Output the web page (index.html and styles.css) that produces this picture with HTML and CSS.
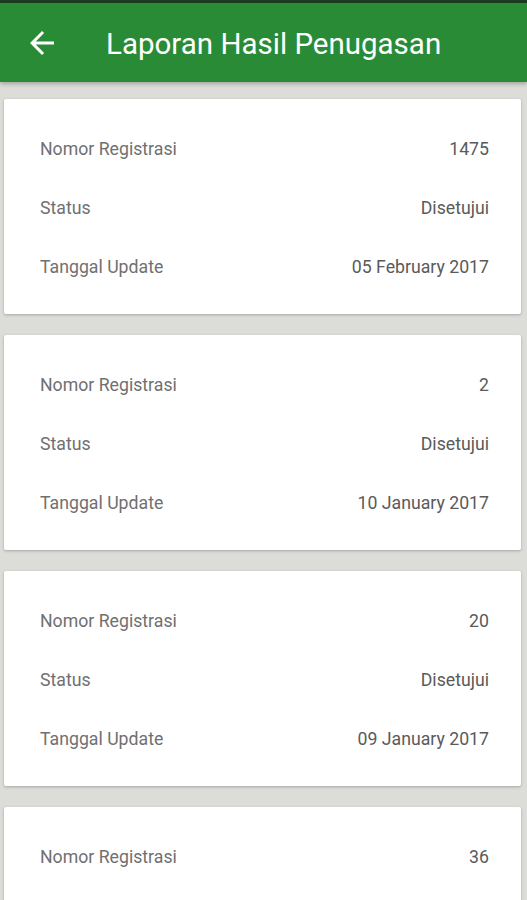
FILE: index.html
```html
<!DOCTYPE html>
<html>
  <head>
    <title>Laporan Hasil Penugasan</title>
    <link rel="stylesheet" href="styles.css">
  </head>
  <body>
    <div class="status-bar"></div>
    <div class="app-bar">
      <svg class="back" viewBox="0 0 24 24">
        <path d="M20 11H7.83l5.59-5.59L12 4l-8 8 8 8 1.41-1.41L7.83 13H20v-2z" fill="#fff"/>
      </svg>
      <span class="title">Laporan Hasil Penugasan</span>
    </div>

    <div class="list">
      <div class="card">
        <div class="row"><span class="label">Nomor Registrasi</span><span class="value">1475</span></div>
        <div class="row"><span class="label">Status</span><span class="value">Disetujui</span></div>
        <div class="row"><span class="label">Tanggal Update</span><span class="value">05 February 2017</span></div>
      </div>
      <div class="card">
        <div class="row"><span class="label">Nomor Registrasi</span><span class="value">2</span></div>
        <div class="row"><span class="label">Status</span><span class="value">Disetujui</span></div>
        <div class="row"><span class="label">Tanggal Update</span><span class="value">10 January 2017</span></div>
      </div>
      <div class="card">
        <div class="row"><span class="label">Nomor Registrasi</span><span class="value">20</span></div>
        <div class="row"><span class="label">Status</span><span class="value">Disetujui</span></div>
        <div class="row"><span class="label">Tanggal Update</span><span class="value">09 January 2017</span></div>
      </div>
      <div class="card">
        <div class="row"><span class="label">Nomor Registrasi</span><span class="value">36</span></div>
      </div>
    </div>
  </body>
</html>
```

FILE: styles.css
```css
html, body {
    padding: 0;
    margin: 0;
}

body {
    background-color: #dcdcd9;
    font-family: Roboto, "Liberation Sans", sans-serif;
    height: 900px;
    overflow: hidden;
}

.status-bar {
    height: 3px;
    background-color: #1d3b21;
}

.app-bar {
    height: 79px;
    background-color: #2a8b36;
    display: flex;
    align-items: center;
    box-shadow: 0 2px 4px rgba(0, 0, 0, 0.25);
    position: relative;
}

.back {
    width: 36px;
    height: 36px;
    margin-left: 24px;
}

.title {
    color: #fff;
    font-size: 29.5px;
    margin-left: 46px;
    margin-top: 2px;
}

.list {
    display: flex;
    flex-direction: column;
    gap: 21px;
    padding: 17px 6px 0 4px;
}

.card {
    background-color: #fff;
    height: 215px;
    box-sizing: border-box;
    padding: 20px 32px 18px 36px;
    box-shadow: 0 1px 3px rgba(0, 0, 0, 0.25);
    border-radius: 2px;
}

.row {
    height: 59px;
    display: flex;
    align-items: center;
    justify-content: space-between;
    font-size: 17.7px;
}

.label {
    color: #707070;
}

.value {
    color: #5a5a5a;
}
```
